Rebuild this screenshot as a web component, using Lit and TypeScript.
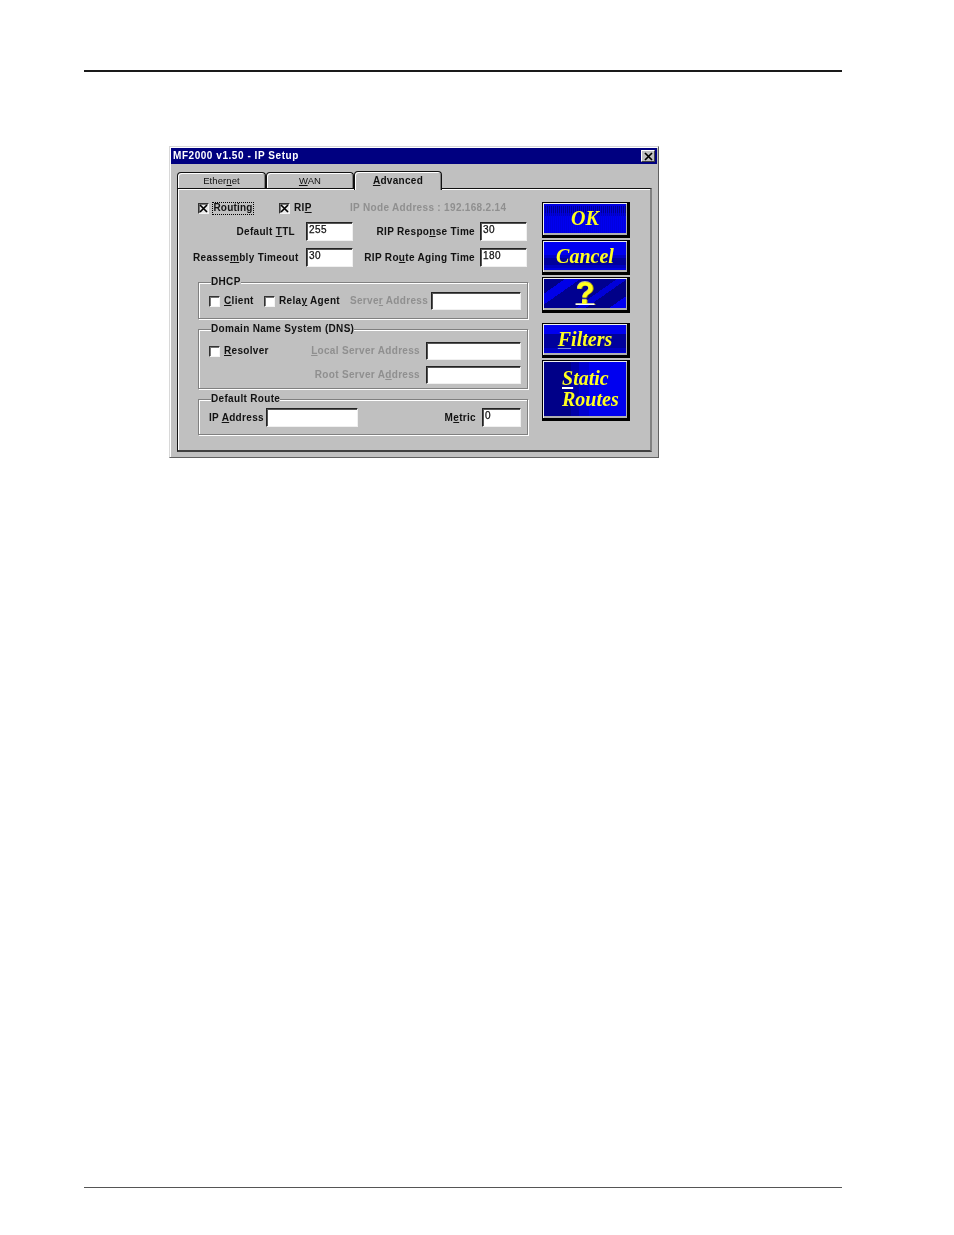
import { LitElement, html, css } from "lit";
import { customElement } from "lit/decorators.js";

const X = html`<svg class="x" viewBox="0 0 9 9" width="9" height="9"><path d="M1 1 L8 8 M8 1 L1 8" stroke="#000" stroke-width="1.7" fill="none"/></svg>`;

@customElement("app-root")
export class AppRoot extends LitElement {
  static styles = css`
    :host { display: block; width: 954px; height: 1235px; background: #fff; overflow: hidden; font-family: "Liberation Sans", Arial, sans-serif; }
    .page { width: 954px; height: 1235px; padding: 70px 112px 0 84px; box-sizing: border-box; display: flex; flex-direction: column; }
    .rule-top { height: 2px; background: #1a1a1a; flex: none; }
    .rule-bottom { height: 1px; background: #555; flex: none; margin-top: 729px; }
    .win { flex: none; box-sizing: border-box; width: 490px; height: 312px; margin: 74px 0 0 85px; background: #c0c0c0; border: 1px solid; border-color: #d8d8d8 #606060 #606060 #d8d8d8; padding: 1px; box-shadow: inset 1px 1px #fff; color: #111; font-size: 10px; font-weight: 700; letter-spacing: .32px; line-height: 12px; filter: blur(.3px); }
    .title { height: 16px; background: #000080; color: #fff; display: flex; align-items: center; justify-content: space-between; padding: 0 2px; letter-spacing: .55px; }
    .close { width: 14px; height: 12px; background: #c0c0c0; border: 1px solid; border-color: #fff #404040 #404040 #fff; box-sizing: border-box; display: flex; align-items: center; justify-content: center; margin-right: 0; }
    .tabs { display: flex; height: 17px; margin: 7px 0 0 6px; align-items: flex-start; }
    .tab { box-sizing: border-box; width: 88px; height: 16px; margin-top: 1px; background: #c0c0c0; border: 1px solid #111; border-bottom: none; border-radius: 4px 4px 0 0; box-shadow: inset 1px 1px #fff, inset -1px 0 #808080; text-align: center; font-weight: 400; line-height: 15px; font-size: 9.5px; letter-spacing: .1px; }
    .tab.first { width: 89px; }
    .tab.on { position: relative; z-index: 1; height: 19px; margin-top: 0; border-bottom: none; font-weight: 700; line-height: 17px; font-size: 10px; letter-spacing: .3px; }
    .panel { box-sizing: border-box; width: 475px; height: 264px; margin-left: 6px; border-style: solid; border-width: 1px 2px 2px 1px; border-color: #111 #808080 #404040 #111; box-shadow: inset 1px 1px #fff; padding: 12px 20px 0 15px; display: flex; gap: 14px; }
    .left { width: 335px; flex: none; display: flex; flex-direction: column; }
    .right { width: 88px; flex: none; display: flex; flex-direction: column; margin-top: 1px; }
    .row1 { display: flex; align-items: center; height: 14px; padding-left: 5px; margin-bottom: 7px; }
    .cb { flex: none; box-sizing: border-box; width: 11px; height: 11px; background: #fff; border: 1px solid; border-color: #333 #f4f4f4 #f4f4f4 #333; box-shadow: inset 1px 1px #777; display: flex; align-items: center; justify-content: center; }
    .row1 .cb { background: #e8e8e8; }
    .routing { margin-left: 3px; width: 42px; height: 13px; box-sizing: border-box; outline: 1px dotted #000; outline-offset: -1px; display: flex; align-items: center; justify-content: center; letter-spacing: .2px; }
    .c-rip { margin-left: 25px; }
    .rip { margin-left: 4px; width: 56px; }
    .dis { color: #8f8f8f; }
    .grid2 { display: grid; grid-template-columns: 102px 47px 122px 47px; column-gap: 0; height: 19px; align-items: center; margin-bottom: 7px; }
    .grid2 .input:nth-child(2) { margin-left: 11px; }
    .grid2 > :nth-child(2) { margin-left: 11px; width: 47px; }
    .grid2 { grid-template-columns: 102px 58px 122px 52px; }
    .grid2 > :nth-child(4) { margin-left: 5px; width: 47px; }
    .r { text-align: right; white-space: nowrap; }
    .input { box-sizing: border-box; height: 19px; background: #fff; border: 1px solid; border-color: #222 #f0f0f0 #f0f0f0 #222; box-shadow: inset 1px 1px #555; padding: 1px 0 0 2px; font-weight: 400; font-size: 10px; letter-spacing: .5px; line-height: 12px; -webkit-text-stroke: .25px #111; }
    fieldset { margin: 4px 0 0 5px; width: 330px; box-sizing: border-box; min-width: 0; border: 1px solid #808080; box-shadow: inset 1px 1px #fff, 1px 1px #fff; }
    fieldset.first { margin-top: 2px; }
    legend { padding: 0; margin-left: 2px; background: #c0c0c0; height: 12px; line-height: 12px; white-space: nowrap; }
    .f-dhcp { padding: 4px 6px 8px 10px; }
    .f-dns { padding: 7px 6px 4px 10px; }
    .f-def { padding: 3px 6px 7px 10px; }
    .g { display: grid; align-items: center; }
    .g-dhcp { grid-template-columns: 15px 40px 15px 71px 81px 90px; }
    .g-dns { grid-template-columns: 15px 60px 142px 95px; row-gap: 6px; }
    .g-def { grid-template-columns: 57px 92px 124px 39px; }
    .pr { padding-right: 6px; text-align: right; white-space: nowrap; }
    .h18 { height: 18px; }
    .btn { box-sizing: border-box; width: 88px; flex: none; border-style: solid; border-color: #000; border-width: 1px 3px 3px 1px; outline: 1px solid #000; outline-offset: -1px; display: flex; align-items: center; justify-content: center; text-align: center; color: #ffff20; font-family: "Liberation Serif", "Times New Roman", serif; font-size: 20px; font-style: italic; font-weight: 700; line-height: 21px; letter-spacing: 0; box-shadow: inset 1px 1px #f0f0f0, inset -1px -2px #b0b0b0; padding-bottom: 1px; }
    .btn u { text-decoration-thickness: 1px; text-underline-offset: 2px; }
    .ok { height: 36px; margin-bottom: 2px; background: repeating-linear-gradient(90deg, transparent 0 1px, #0000e0 1px 2px) 0 0 / 100% 100%, linear-gradient(#0000e0 0 3px, #000090 3px 10px, #0000c0 10px 13px, #0000f0 13px); }
    .cancel { height: 35px; margin-bottom: 2px; background: linear-gradient(#0000f0 0 14px, #0000c8 14px 17px, #00009c 17px 24px, #0000c0 24px 27px, #0000e0 27px); }
    .help { height: 36px; margin-bottom: 10px; background: linear-gradient(145deg, #000088 0 18%, #0000e8 18% 30%, #000090 30% 58%, #0000d8 58% 66%, #000088 66% 84%, #0000f0 84%); font-family: "Liberation Sans", sans-serif; font-style: normal; font-size: 31px; font-weight: 700; text-shadow: 1px 0 #b0a000, 0 -1px #b8b8a0; }
    .help u { text-decoration-color: #fff; text-underline-offset: 0; }
    .filters { height: 35px; margin-bottom: 2px; background: linear-gradient(#0000f0 0 10px, #00009c 10px 24px, #0000c0 24px 28px, #0000e0 28px); }
    .filters u { text-decoration-color: #8090e0; }
    .static { height: 61px; background: linear-gradient(90deg, #000088 0 28px, #0000a8 28px 36px, #0000d0 36px 46px, #0000f0 46px); flex-direction: column; padding-left: 6px; }
    .static div { width: 52px; text-align: left; }
    .static u { text-decoration-color: #fff; text-decoration-thickness: 2px; }
  `;

  render() {
    return html`<div class="page">
      <div class="rule-top"></div>
      <div class="win">
        <div class="title"><span>MF2000 v1.50 - IP Setup</span><span class="close">${X}</span></div>
        <div class="tabs">
          <div class="tab first">Ether<u>n</u>et</div>
          <div class="tab"><u>W</u>AN</div>
          <div class="tab on"><u>A</u>dvanced</div>
        </div>
        <div class="panel">
          <div class="left">
            <div class="row1">
              <span class="cb">${X}</span>
              <span class="routing">Routing</span>
              <span class="cb c-rip">${X}</span>
              <span class="rip">RI<u>P</u></span>
              <span class="dis">IP Node Address : 192.168.2.14</span>
            </div>
            <div class="grid2">
              <span class="r">Default <u>T</u>TL</span><div class="input">255</div>
              <span class="r">RIP Respo<u>n</u>se Time</span><div class="input">30</div>
            </div>
            <div class="grid2">
              <span class="r">Reasse<u>m</u>bly Timeout</span><div class="input">30</div>
              <span class="r">RIP Ro<u>u</u>te Aging Time</span><div class="input">180</div>
            </div>
            <fieldset class="first f-dhcp">
              <legend>DHCP</legend>
              <div class="g g-dhcp">
                <span class="cb"></span><span><u>C</u>lient</span>
                <span class="cb"></span><span>Rela<u>y</u> Agent</span>
                <span class="dis">Serve<u>r</u> Address</span><div class="input h18"></div>
              </div>
            </fieldset>
            <fieldset class="f-dns">
              <legend>Domain Name System (DNS)</legend>
              <div class="g g-dns">
                <span class="cb"></span><span><u>R</u>esolver</span>
                <span class="dis pr"><u>L</u>ocal Server Address</span><div class="input h18"></div>
                <span></span><span></span>
                <span class="dis pr">Root Server A<u>d</u>dress</span><div class="input h18"></div>
              </div>
            </fieldset>
            <fieldset class="f-def">
              <legend>Default Route</legend>
              <div class="g g-def">
                <span>IP <u>A</u>ddress</span><div class="input"></div>
                <span class="pr">M<u>e</u>tric</span><div class="input">0</div>
              </div>
            </fieldset>
          </div>
          <div class="right">
            <div class="btn ok">OK</div>
            <div class="btn cancel">Cancel</div>
            <div class="btn help"><u>?</u></div>
            <div class="btn filters"><span><u>F</u>ilters</span></div>
            <div class="btn static"><div><u>S</u>tatic</div><div>Routes</div></div>
          </div>
        </div>
      </div>
      <div class="rule-bottom"></div>
    </div>`;
  }
}
